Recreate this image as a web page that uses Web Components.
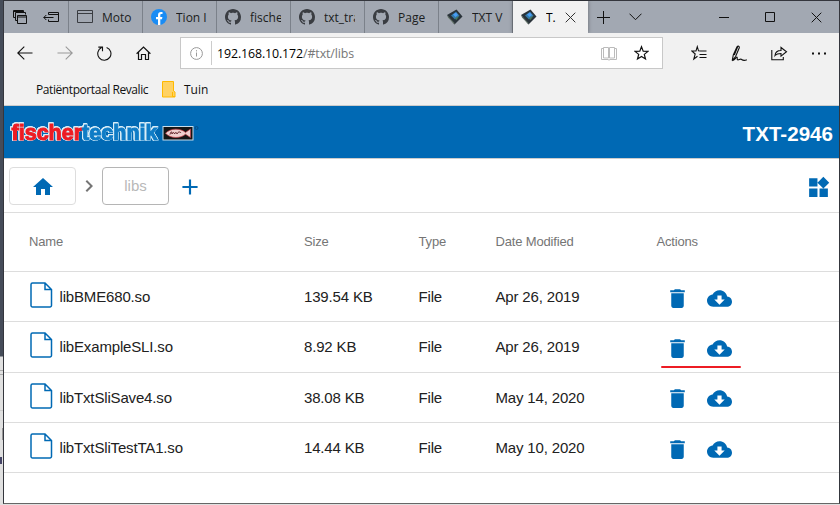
<!DOCTYPE html>
<html lang="en">
<head>
<meta charset="utf-8">
<title>TXT-2946</title>
<style>
html,body{margin:0;height:100%;overflow:hidden}
body{background:#474d5a}
</style>
</head>
<body>
<desktop-view></desktop-view>
<script>
const define = (name, html, setup) => {
  const tpl = document.createElement('template');
  tpl.innerHTML = html;
  customElements.define(name, class extends HTMLElement {
    constructor() {
      super();
      this.attachShadow({mode: 'open'}).append(tpl.content.cloneNode(true));
    }
    connectedCallback() { if (setup) setup(this, this.shadowRoot); }
  });
};

const line = (d, w = 1, extra = '') => `<path d="${d}" fill="none" stroke="currentColor" stroke-width="${w}" ${extra}/>`;
const solid = (d) => `<path d="${d}" fill="currentColor"/>`;
// name: [width, height, viewBox, markup]
const ICONS = {
  stack: [16, 16, '0 0 16 16', line('M3.500 8.500h-2v-7h10v2M1.500 2.500h10M5.500 11.500h-2v-8h10v2M5.500 6.500h9v8h-9zM5.500 8h9')],
  setaside: [17, 12, '0 0 17 12', line('M5.500 3.500v-2h10v9h-10v-2M5.500 3.500h10M.8 6.500h9.700M3.300 4 .8 6.500 3.300 9')],
  page: [17, 14, '0 0 17 14', line('M.5 .5h15v12h-15zM.5 3.500h15')],
  facebook: [16, 16, '0 0 16 16', '<circle cx="8" cy="8" r="8" fill="#1a8cf4"/><path d="M7 16v-5.700H5V8h2V6.200c0-2.100 1.100-3.200 3-3.200l1.500.1v2h-1C9.600 5.100 9.300 5.600 9.300 6.300V8h2.100l-.4 2.300H9.300V16z" fill="#fff"/>'],
  github: [16, 16, '0 0 16 16', solid('M8 0C3.580 0 0 3.580 0 8c0 3.540 2.290 6.530 5.470 7.590.4.070.55-.17.55-.38 0-.19-.01-.82-.01-1.490-2.010.37-2.530-.49-2.690-.94-.09-.23-.48-.94-.82-1.130-.28-.15-.68-.52-.01-.53.630-.010 1.080.58 1.230.82.72 1.210 1.870.87 2.330.66.070-.52.28-.87.510-1.070-1.780-.2-3.640-.89-3.640-3.950 0-.87.310-1.590.82-2.150-.08-.2-.36-1.020.08-2.120 0 0 .67-.21 2.200.82.64-.18 1.320-.27 2-.27s1.360.09 2 .27c1.530-1.040 2.200-.82 2.200-.82.44 1.100.16 1.920.08 2.120.510.56.82 1.270.82 2.150 0 3.070-1.870 3.750-3.650 3.950.29.25.54.73.54 1.480 0 1.070-.01 1.930-.01 2.200 0 .21.15.46.55.38A8 8 0 0 0 16 8c0-4.420-3.580-8-8-8z')],
  txt: [16, 16, '0 0 16 16', '<path d="M0 6 9.500.5 15.500 7.500 7.500 15.500z" fill="#2a333a"/><path d="M0 6 7.500 14v1.500L1 8.500z" fill="#607065"/><path d="M4 6.500 9 2.800 12.500 6.800 8 10.500z" fill="#347aa8"/><path d="M6 5.500 9 3.500 11 6 8.500 8z" fill="#4a9df5"/><path d="M8 9.500 12.500 6.800 9.500 11z" fill="#49785a"/>'],
  close: [11, 11, '0 0 11 11', line('M.7.7 10.300 10.300M10.300.7.7 10.300')],
  plus: [13, 13, '0 0 13 13', line('M6.500 0v13M0 6.500h13')],
  down: [13, 8, '0 0 13 8', line('M.5.700 6.500 6.700 12.500.700')],
  min: [11, 11, '0 0 11 11', line('M0 5.500h10')],
  max: [11, 11, '0 0 11 11', line('M.5.5h9v9h-9z')],
  back: [16, 14, '0 0 16 14', line('M.8 7H15.500M7.300.7.8 7l6.500 6.300', 1.1)],
  forward: [16, 14, '0 0 16 14', line('M15.200 7H.5M8.700.7 15.200 7 8.700 13.300', 1.1)],
  reload: [15, 15, '0 0 15 15', line('M9.600 1.400A6.600 6.600 0 1 1 4.600 1.600M1.300 1.100h4.200v4.200', 1.1)],
  house: [15, 15, '0 0 15 15', line('M.6 7.700 7.500 1l6.900 6.700M2.500 6v7.500h3v-5h4v5h3V6', 1.2)],
  info: [13, 13, '0 0 13 13', line('M6.500.6a5.900 5.900 0 1 1 0 11.800 5.900 5.900 0 0 1 0-11.800zM6.500 5.500v4M6.500 3.200v1.200')],
  book: [16, 15, '0 0 16 15', line('M2.500 1.500h5v10.500h-5zM8.500 1.500h5v10.500h-5zM2.500 2.500h-2v11h6.500l1 .700 1-.700h6.500v-11h-2')],
  star: [15, 16, '0 0 15 16', line('M7.500 1.700 9.200 6.100 14 6.400 10.300 9.400 11.500 14 7.500 11.400 3.500 14 4.700 9.400 1 6.400 5.800 6.100z', 1.2)],
  hub: [16, 16, '0 0 16 16', line('M9.500 6 7.500 5.800 6.300 1.700 5 6H.8l3.400 3-1.400 5 3.700-2.800M7.500 6h8M8.500 9.500h7M8.500 12.500h7', 1.1)],
  pen: [17, 17, '0 0 17 17', line('M1.200 15.600 2.300 10 6 1.800c1.100-1.400 2.700-.4 2.300 1L4.600 11.500zM6.800 1.500 3.300 10M1.200 15.600c2.500 0 3.500-3 4.800-3.500.9.600-.4 2.500.500 2.700 1.500.500 2.500-1.400 3.800-.5 1.200.9 2.200 2 5.500.500', 1.1)],
  share: [17, 15, '0 0 17 15', line('M.8 4v9.800h11.500V11M4 9.500c.4-3.600 2.800-5 6-5V1.500l5.500 4.300-5.500 4.400V7.500c-2.800 0-4.500.300-6 2z', 1.1)],
  dots: [15, 3, '0 0 15 3', '<path d="M0 .5h2v2H0zM6 .5h2v2H6zM12 .5h2v2h-2z" fill="currentColor"/>'],
  note: [14, 17, '0 0 14 17', '<path d="M.5.5h11v9.500l1.500 1v5H.5z" fill="#ffd263" stroke="#ffb900"/><path d="M10.500 11v4.500h2.500" fill="none" stroke="#ffb900"/>'],
  home: [24, 24, '0 0 24 24', solid('M10 20v-6h4v6h5v-8h3L12 3 2 12h3v8z')],
  chevron: [24, 24, '0 0 24 24', solid('M10 6 8.590 7.410 13.170 12l-4.580 4.590L10 18l6-6z')],
  add: [26, 26, '0 0 24 24', solid('M19 13h-6v6h-2v-6H5v-2h6V5h2v6h6z')],
  widgets: [25, 25, '0 0 24 24', solid('M13 13v8h8v-8h-8zM3 21h8v-8H3v8zM3 3v8h8V3H3zm13.660-1.310L11 7.340 16.660 13l5.660-5.660-5.660-5.650z')],
  trash: [25, 25, '0 0 24 24', solid('M6 19c0 1.100.9 2 2 2h8c1.100 0 2-.9 2-2V7H6v12zM19 4h-3.500l-1-1h-5l-1 1H5v2h14V4z')],
  cloud: [25, 25, '0 0 24 24', solid('M19.350 10.040C18.670 6.590 15.640 4 12 4 9.110 4 6.600 5.640 5.350 8.040 2.340 8.360 0 10.910 0 14c0 3.310 2.690 6 6 6h13c2.760 0 5-2.240 5-5 0-2.640-2.050-4.780-4.650-4.960zM17 13l-5 5-5-5h3V9h4v4h3z')],
  file: [23, 26, '0 0 23 26', line('M2.500 1h12.500l6.500 6.500v16a1.500 1.500 0 0 1-1.500 1.500h-17.500A1.500 1.500 0 0 1 1 23.500v-21A1.500 1.500 0 0 1 2.500 1zM15 1v6.500h6.500', 1.5)]
};

define('ui-icon', `<style>:host{display:block;flex:none}svg{display:block}</style>`, (el, root) => {
  const icon = ICONS[el.getAttribute('name')];
  if (!icon) return;
  const [w, h, box, body] = icon;
  root.innerHTML += `<svg width="${w}" height="${h}" viewBox="${box}">${body}</svg>`;
});

define('browser-tab', `<style>
:host{display:flex;align-items:center;box-sizing:border-box;width:74px;height:32px;padding-left:8px;border-right:1px solid #7b818a;color:#3a3d42;flex:none}
:host([active]){background:#f1f1f1;border:0;width:75px;padding-left:8px;box-shadow:0 0 4px #0006}
.ic{width:25px}
.t{width:31px;overflow:hidden;white-space:nowrap;color:#1b1d20}
:host([active]) .t{width:10px;color:#000}
::slotted([slot=end]){margin-left:9px;color:#333}
</style><div class="ic"></div><div class="t"><slot></slot></div><slot name="end"></slot>`,
(el, root) => {
  const ic = document.createElement('ui-icon');
  ic.setAttribute('name', el.getAttribute('icon'));
  root.querySelector('.ic').replaceChildren(ic);
});

define('tab-strip', `<style>
:host{display:flex;align-items:center;height:32px;background:#a2a8b2;color:#111;font:12px "Open Sans","Noto Sans",sans-serif}
.tools{display:flex;align-items:center;box-sizing:border-box;width:65px;height:32px;padding-left:8px;gap:15px;border-right:1px solid #7b818a}
.more{display:flex;align-items:center;gap:19px;padding-left:9px}
.win{display:flex;align-items:center;gap:35px;margin-left:auto;padding-right:17px}
</style>
<div class="tools"><ui-icon name="stack"></ui-icon><ui-icon name="setaside"></ui-icon></div>
<slot></slot>
<div class="more"><ui-icon name="plus"></ui-icon><ui-icon name="down"></ui-icon></div>
<div class="win"><ui-icon name="min"></ui-icon><ui-icon name="max"></ui-icon><ui-icon name="close"></ui-icon></div>`);

define('nav-bar', `<style>
:host{display:flex;align-items:center;box-sizing:border-box;height:40px;padding:0 12px 0 13px;background:#f1f1f1;color:#111;font:12.400px "Open Sans","Noto Sans",sans-serif}
.nav{display:flex;align-items:center;gap:24px;width:163px}
.url{display:flex;align-items:center;box-sizing:border-box;width:483px;height:32px;border:1px solid #c8c8c8;background:#fff;padding:0 13px 0 9px}
.sep{width:1px;height:24px;background:#ccc;margin:0 5px 0 8px}
.addr{letter-spacing:-.12px;color:#000;white-space:nowrap}.addr span{color:#777}
.end{display:flex;align-items:center;gap:17px;margin-left:auto}
.right{display:flex;align-items:center;justify-content:space-between;width:135px;margin-left:auto}
.right ui-icon:first-child,.right ui-icon:nth-child(3){margin-left:-1px}
.off{color:#999}.pale{color:#bbb}
</style>
<div class="nav"><ui-icon name="back"></ui-icon><ui-icon name="forward" class="off"></ui-icon><ui-icon name="reload"></ui-icon><ui-icon name="house"></ui-icon></div>
<div class="url"><ui-icon name="info" class="off"></ui-icon><div class="sep"></div><div class="addr">192.168.10.172<span>/#txt/libs</span></div>
<div class="end"><ui-icon name="book" class="pale"></ui-icon><ui-icon name="star"></ui-icon></div></div>
<div class="right"><ui-icon name="hub"></ui-icon><ui-icon name="pen"></ui-icon><ui-icon name="share"></ui-icon><ui-icon name="dots"></ui-icon></div>`);

define('favorites-bar', `<style>
:host{display:flex;align-items:center;box-sizing:border-box;height:33px;padding:1px 0 0 32px;background:#f1f1f1;border-bottom:1px solid #ccc;color:#111;font:12px "Open Sans","Noto Sans",sans-serif}
.a{width:113px;white-space:nowrap;letter-spacing:-.42px}
.b{display:flex;align-items:center;gap:8px;margin-left:13px}
</style><div class="a">Patiëntportaal Revalic</div><div class="b"><ui-icon name="note"></ui-icon><span>Tuin</span></div>`);

define('app-header', `<style>
:host{display:flex;align-items:center;justify-content:space-between;box-sizing:border-box;height:53px;padding:0 6px 0 5px;background:#0069b4;border-bottom:1px solid #ccc;color:#fff;font:bold 20.600px "Liberation Sans",Arial,sans-serif}
.name{padding-top:3px}
svg{display:block;font:bold 22.500px "Liberation Sans",Arial,sans-serif}
text{filter:drop-shadow(.7px 0 .2px #d9edf7) drop-shadow(-.7px 0 .2px #d9edf7) drop-shadow(0 .7px .2px #d9edf7) drop-shadow(0 -.7px .2px #d9edf7)}
.r{fill:#ed1c24;stroke:#ed1c24}.b{fill:#0f7cc6;stroke:#0f7cc6}
</style>
<svg width="194" height="26" viewBox="0 0 194 26">
<text x="2.500" y="20.500" textLength="146" lengthAdjust="spacingAndGlyphs" stroke-width="1.100"><tspan class="r">fischer</tspan><tspan class="b">technik</tspan></text>
<rect x="154" y="7.500" width="30" height="13.500" fill="#151515" stroke="#c9ddea"/>
<path d="M156.500 14.300c5-5.500 15-5.300 20-.9l5-3.400v8.600l-5-3.400c-5 4.400-15 4.600-20-.9z" fill="#efcfcf" stroke="#c23a42" stroke-width=".7"/>
<path d="M161 15.500c1-3.500 2-3.500 2-.5 1-2 2-2 2.500 0 1-2 2-2 2.500 0 1-2.500 3-2.500 4-1" fill="none" stroke="#5a1a20"/>
<circle cx="187.500" cy="9" r="1.500" fill="none" stroke="#064a80" stroke-width=".9"/>
</svg><div class="name"><slot></slot></div>`);

define('crumb-bar', `<style>
:host{display:flex;align-items:center;box-sizing:border-box;height:54px;padding:0 8px 0 5px;border-bottom:1px solid #ddd;color:#0069b4;font:15px "Liberation Sans",Arial,sans-serif}
.btn{display:flex;align-items:center;justify-content:center;box-sizing:border-box;width:67px;height:38px;border:1px solid #ddd;border-radius:4px}
.btn ui-icon{margin-top:2px}
.cur{border-color:#b5b5b5;color:#b8b8b8}
.chev{color:#757575;margin:0 1px}
.plus{margin:3px 0 0 8px}
.grid{margin:3px 0 0 auto}
</style>
<div class="btn"><ui-icon name="home"></ui-icon></div><ui-icon class="chev" name="chevron"></ui-icon>
<div class="btn cur"><slot></slot></div><ui-icon class="plus" name="add"></ui-icon><ui-icon class="grid" name="widgets"></ui-icon>`);

const COLS = 'grid-template-columns:275px 114.500px 77px 161px 1fr';
define('file-head', `<style>
:host{display:grid;${COLS};align-items:center;box-sizing:border-box;height:59px;padding:0 0 2px 25px;border-bottom:1px solid #ddd;color:#757575;font:13px "Liberation Sans",Arial,sans-serif;letter-spacing:-.17px}
</style><span>Name</span><span>Size</span><span>Type</span><span>Date Modified</span><span>Actions</span>`);

define('file-row', `<style>
:host{display:grid;${COLS};align-items:center;box-sizing:border-box;height:50.330px;padding-left:25px;border-bottom:1px solid #ddd;color:#212121;font:15px "Liberation Sans",Arial,sans-serif;letter-spacing:-.16px}
.name{display:flex;align-items:center;gap:6.500px;padding-left:1.500px}
.name ui-icon{color:#0069b4;margin:-3px 0 0 -.5px}
.act{position:relative;display:flex;gap:17px;padding:3px 0 0 8.300px;color:#0069b4}
:host([marked]) .act::after{content:"";position:absolute;left:4.500px;top:33px;width:80px;height:2px;border-radius:1px;background:#ed1c24}
</style>
<div class="name"><ui-icon name="file"></ui-icon><slot></slot></div><slot name="size"></slot><span>File</span><slot name="date"></slot>
<div class="act"><ui-icon name="trash"></ui-icon><ui-icon name="cloud"></ui-icon></div>`);

define('desktop-view', `<style>
:host{display:flex;box-sizing:border-box;width:840px;height:505px;background:
linear-gradient(#aaa,#aaa) 0 370px/3px 1px no-repeat,linear-gradient(#aaa,#aaa) 0 374px/3px 1px no-repeat,
linear-gradient(#ccc,#ccc) 0 410px/3px 1px no-repeat,linear-gradient(#999,#999) 2px 428px/1px 12px no-repeat,
linear-gradient(#446,#446) 0 457px/2px 7px no-repeat,
linear-gradient(#454c59 0 356px,#e0e0e0 357px);padding-left:3px}
.win{box-sizing:border-box;width:837px;height:504px;border:1px solid #34363d;border-bottom-color:#666;background:#fff;display:flex;flex-direction:column}
.win>*{flex:none}
</style>
<div class="win">
<tab-strip>
<browser-tab icon="page">Moto</browser-tab><browser-tab icon="facebook">Tion I</browser-tab><browser-tab icon="github">fische</browser-tab><browser-tab icon="github">txt_tra</browser-tab><browser-tab icon="github">Page</browser-tab><browser-tab icon="txt">TXT V</browser-tab><browser-tab icon="txt" active>T.<ui-icon slot="end" name="close"></ui-icon></browser-tab>
</tab-strip>
<nav-bar></nav-bar>
<favorites-bar></favorites-bar>
<app-header>TXT-2946</app-header>
<crumb-bar>libs</crumb-bar>
<file-head></file-head>
<file-row>libBME680.so<span slot="size">139.54 KB</span><span slot="date">Apr 26, 2019</span></file-row>
<file-row marked>libExampleSLI.so<span slot="size">8.92 KB</span><span slot="date">Apr 26, 2019</span></file-row>
<file-row>libTxtSliSave4.so<span slot="size">38.08 KB</span><span slot="date">May 14, 2020</span></file-row>
<file-row>libTxtSliTestTA1.so<span slot="size">14.44 KB</span><span slot="date">May 10, 2020</span></file-row>
</div>`);
</script>
</body>
</html>
